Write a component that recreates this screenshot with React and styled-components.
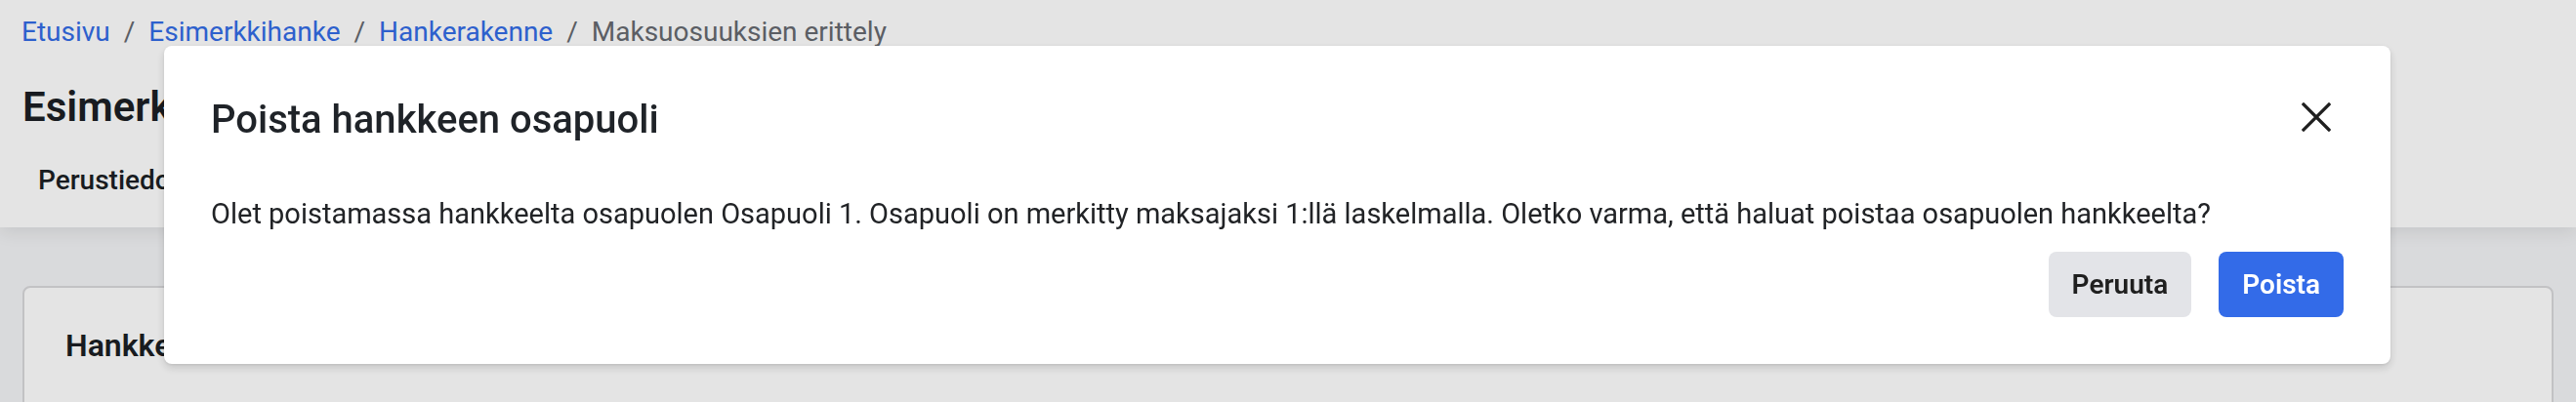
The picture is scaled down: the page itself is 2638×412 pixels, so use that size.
import React from "react";
import styled, { createGlobalStyle } from "styled-components";

const Global = createGlobalStyle`
  html, body { margin: 0; padding: 0; }
  body {
    font-family: Roboto, "Liberation Sans", Arial, sans-serif;
    background: #f3f4f6;
    color: #212529;
    overflow: hidden;
  }
`;

const Page = styled.div`
  min-height: 412px;
  background: #f3f4f6;
`;

const Header = styled.header`
  background: #ffffff;
  height: 233px;
  box-sizing: border-box;
  padding: 13px 22px 0;
  box-shadow: 0 6px 16px rgba(0, 0, 0, 0.08);
  position: relative;
  z-index: 1;
`;

const Crumbs = styled.nav`
  display: flex;
  align-items: center;
  font-size: 28px;
  line-height: 40px;
  white-space: nowrap;
`;

const CrumbLink = styled.a`
  color: #336ce6;
  text-decoration: none;
`;

const CrumbCurrent = styled.span`
  color: #666a70;
`;

const Sep = styled.span`
  color: #666a70;
  margin: 0 14px;
`;

const Title = styled.h1`
  margin: 32px 0 0 1px;
  font-size: 42px;
  line-height: 50px;
  font-weight: 600;
  color: #1b1f24;
`;

const Tabs = styled.div`
  display: flex;
  gap: 40px;
  margin-top: 30px;
  padding-left: 17px;
`;

const Tab = styled.span`
  font-size: 28px;
  line-height: 40px;
  font-weight: 500;
  color: #1b1f24;
`;

const Main = styled.main`
  padding: 60px 23px 0;
`;

const Card = styled.section`
  background: #ffffff;
  border: 2px solid #d9d9dc;
  border-radius: 8px;
  padding: 37px 42px 60px;
  min-height: 200px;
`;

const CardTitle = styled.h2`
  margin: 0;
  font-size: 32px;
  line-height: 44px;
  font-weight: 600;
  color: #1b1f24;
`;

const Overlay = styled.div`
  position: fixed;
  inset: 0;
  z-index: 10;
  background: rgba(0, 0, 0, 0.105);
  padding: 47px 0 0 168px;
  box-sizing: border-box;
`;

const Dialog = styled.div`
  width: 2280px;
  box-sizing: border-box;
  background: #ffffff;
  border-radius: 8px;
  box-shadow: 0 4px 10px rgba(0, 0, 0, 0.14), 0 1px 3px rgba(0, 0, 0, 0.08);
  padding: 48px;
`;

const DialogHeader = styled.div`
  display: flex;
  align-items: center;
  justify-content: space-between;
  height: 56px;
`;

const DialogTitle = styled.h2`
  margin: 0;
  font-size: 40px;
  line-height: 56px;
  font-weight: 500;
  color: #1f2328;
`;

const CloseButton = styled.button`
  border: 0;
  background: transparent;
  padding: 0;
  width: 56px;
  height: 56px;
  display: flex;
  align-items: center;
  justify-content: center;
  margin-top: -6px;
  cursor: pointer;
  color: #1f1f1f;
`;

const DialogBody = styled.p`
  margin: 44px 0 0;
  font-size: 29px;
  line-height: 48px;
  color: #212326;
  white-space: nowrap;
`;

const Footer = styled.div`
  display: flex;
  justify-content: flex-end;
  gap: 28px;
  margin-top: 15px;
`;

const Button = styled.button`
  height: 67px;
  padding: 0 24px;
  border: 0;
  border-radius: 8px;
  font-family: inherit;
  font-size: 28px;
  font-weight: 600;
  cursor: pointer;
  background: ${(p) => (p.$primary ? "#336be8" : "#e3e4e8")};
  color: ${(p) => (p.$primary ? "#ffffff" : "#1f1f1f")};
`;

function CloseIcon() {
  return (
    <svg width="30" height="30" viewBox="0 0 30 30" fill="none">
      <path
        d="M2 2 L28 28 M28 2 L2 28"
        stroke="currentColor"
        strokeWidth="3.2"
        strokeLinecap="square"
      />
    </svg>
  );
}

export default function App() {
  return (
    <>
      <Global />
      <Page>
        <Header>
          <Crumbs>
            <CrumbLink href="#">Etusivu</CrumbLink>
            <Sep>/</Sep>
            <CrumbLink href="#">Esimerkkihanke</CrumbLink>
            <Sep>/</Sep>
            <CrumbLink href="#">Hankerakenne</CrumbLink>
            <Sep>/</Sep>
            <CrumbCurrent>Maksuosuuksien erittely</CrumbCurrent>
          </Crumbs>
          <Title>Esimerkkihanke</Title>
          <Tabs>
            <Tab>Perustiedot</Tab>
            <Tab>Hankerakenne</Tab>
            <Tab>Maksuosuudet</Tab>
          </Tabs>
        </Header>
        <Main>
          <Card>
            <CardTitle>Hankkeen osapuolet</CardTitle>
          </Card>
        </Main>
      </Page>
      <Overlay>
        <Dialog role="dialog" aria-modal="true">
          <DialogHeader>
            <DialogTitle>Poista hankkeen osapuoli</DialogTitle>
            <CloseButton aria-label="Sulje">
              <CloseIcon />
            </CloseButton>
          </DialogHeader>
          <DialogBody>
            Olet poistamassa hankkeelta osapuolen Osapuoli 1. Osapuoli on merkitty
            maksajaksi 1:llä laskelmalla. Oletko varma, että haluat poistaa
            osapuolen hankkeelta?
          </DialogBody>
          <Footer>
            <Button>Peruuta</Button>
            <Button $primary>Poista</Button>
          </Footer>
        </Dialog>
      </Overlay>
    </>
  );
}
